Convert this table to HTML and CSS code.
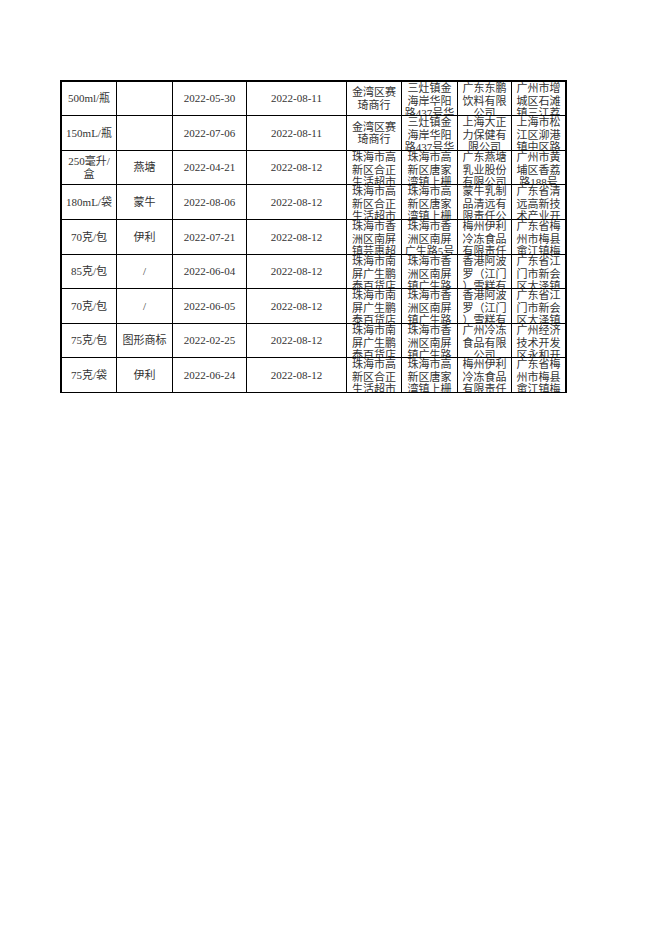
FILE: index.html
```html
<!DOCTYPE html>
<html lang="zh-CN">
<head>
<meta charset="utf-8">
<title>Sheet</title>
<link rel="stylesheet" href="styles.css">
</head>
<body>
<div class="sheet">
  <div class="grid">
    <div class="c">500ml/瓶</div><div class="c"></div><div class="c">2022-05-30</div><div class="c">2022-08-11</div>
    <div class="c">金湾区赛<br>琦商行</div><div class="c t">三灶镇金<br>海岸华阳<br>路437号华</div><div class="c t">广东东鹏<br>饮料有限<br>公司</div><div class="c t last">广州市增<br>城区石滩<br>镇三江荔</div>

    <div class="c">150mL/瓶</div><div class="c"></div><div class="c">2022-07-06</div><div class="c">2022-08-11</div>
    <div class="c">金湾区赛<br>琦商行</div><div class="c t">三灶镇金<br>海岸华阳<br>路437号华</div><div class="c t">上海大正<br>力保健有<br>限公司</div><div class="c t last">上海市松<br>江区泖港<br>镇中区路</div>

    <div class="c">250毫升/<br>盒</div><div class="c">燕塘</div><div class="c">2022-04-21</div><div class="c">2022-08-12</div>
    <div class="c t">珠海市高<br>新区合正<br>生活超市</div><div class="c t">珠海市高<br>新区唐家<br>湾镇上栅</div><div class="c t">广东燕塘<br>乳业股份<br>有限公司</div><div class="c t last">广州市黄<br>埔区香荔<br>路188号</div>

    <div class="c">180mL/袋</div><div class="c">蒙牛</div><div class="c">2022-08-06</div><div class="c">2022-08-12</div>
    <div class="c t">珠海市高<br>新区合正<br>生活超市</div><div class="c t">珠海市高<br>新区唐家<br>湾镇上栅</div><div class="c t">蒙牛乳制<br>品清远有<br>限责任公</div><div class="c t last">广东省清<br>远高新技<br>术产业开</div>

    <div class="c">70克/包</div><div class="c">伊利</div><div class="c">2022-07-21</div><div class="c">2022-08-12</div>
    <div class="c t">珠海市香<br>洲区南屏<br>镇芸惠超</div><div class="c t">珠海市香<br>洲区南屏<br>广生路5号</div><div class="c t">梅州伊利<br>冷冻食品<br>有限责任</div><div class="c t last">广东省梅<br>州市梅县<br>畲江镇梅</div>

    <div class="c">85克/包</div><div class="c">/</div><div class="c">2022-06-04</div><div class="c">2022-08-12</div>
    <div class="c t">珠海市南<br>屏广生鹏<br>泰百货店</div><div class="c t">珠海市香<br>洲区南屏<br>镇广生路</div><div class="c t">香港阿波<br>罗（江门<br>）雪糕有</div><div class="c t last">广东省江<br>门市新会<br>区大泽镇</div>

    <div class="c">70克/包</div><div class="c">/</div><div class="c">2022-06-05</div><div class="c">2022-08-12</div>
    <div class="c t">珠海市南<br>屏广生鹏<br>泰百货店</div><div class="c t">珠海市香<br>洲区南屏<br>镇广生路</div><div class="c t">香港阿波<br>罗（江门<br>）雪糕有</div><div class="c t last">广东省江<br>门市新会<br>区大泽镇</div>

    <div class="c">75克/包</div><div class="c">图形商标</div><div class="c">2022-02-25</div><div class="c">2022-08-12</div>
    <div class="c t">珠海市南<br>屏广生鹏<br>泰百货店</div><div class="c t">珠海市香<br>洲区南屏<br>镇广生路</div><div class="c t">广州冷冻<br>食品有限<br>公司</div><div class="c t last">广州经济<br>技术开发<br>区永和开</div>

    <div class="c">75克/袋</div><div class="c">伊利</div><div class="c">2022-06-24</div><div class="c">2022-08-12</div>
    <div class="c t">珠海市高<br>新区合正<br>生活超市</div><div class="c t">珠海市高<br>新区唐家<br>湾镇上栅</div><div class="c t">梅州伊利<br>冷冻食品<br>有限责任</div><div class="c t last">广东省梅<br>州市梅县<br>畲江镇梅</div>
  </div>
</div>
</body>
</html>
```

FILE: styles.css
```css
html, body {
  margin: 0;
  padding: 0;
  background: #ffffff;
}

.sheet {
  padding: 80px 0 0 60px;
}

.grid {
  display: grid;
  grid-template-columns: 55px 56px 74px 100px 55px 56px 54px 55px;
  grid-template-rows: 34px 35px 34px 35px 35px 34px 35px 34px 35px;
  width: max-content;
  border-left: 2px solid #000;
  border-top: 2px solid #000;
  font-family: "Liberation Serif", "Noto Sans CJK SC", serif;
  font-size: 11px;
  line-height: 12.5px;
  color: #333333;
}

.c {
  box-sizing: border-box;
  display: flex;
  align-items: center;
  justify-content: center;
  text-align: center;
  overflow: hidden;
  padding: 0 1px;
  border-right: 1px solid #000;
  border-bottom: 1px solid #000;
  white-space: nowrap;
}

.t {
  align-items: flex-start;
  padding-top: 0;
}

.last {
  border-right-width: 2px;
}
```
